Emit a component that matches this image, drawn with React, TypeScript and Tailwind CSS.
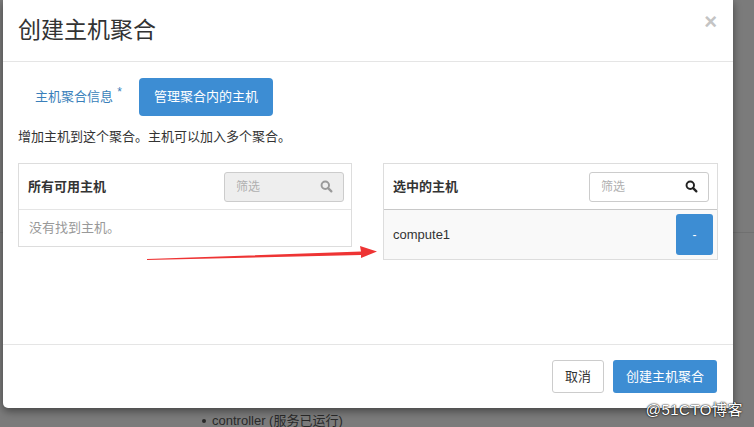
import React from "react";

const cjk = { fontFamily: '"Liberation Sans", "Noto Sans CJK SC", sans-serif' };

const SearchIcon = ({ color }: { color: string }) => (
  <svg width="13" height="13" viewBox="0 0 16 16" fill="none">
    <circle cx="6.5" cy="6.5" r="4.6" stroke={color} strokeWidth="2.4" />
    <path d="M10 10 L14 14" stroke={color} strokeWidth="2.8" strokeLinecap="round" />
  </svg>
);

const FilterInput = ({ disabled }: { disabled?: boolean }) => (
  <div
    className={
      "flex items-center justify-between w-[120px] h-[30px] rounded-[3px] border pl-[11px] pr-[10px] " +
      (disabled ? "bg-[#eeeeee] border-[#cccccc]" : "bg-white border-[#cccccc]")
    }
  >
    <span className="text-[12px] text-[#b0b0b0]">筛选</span>
    <SearchIcon color={disabled ? "#9a9a9a" : "#222222"} />
  </div>
);

export default function App() {
  return (
    <div className="relative w-[754px] h-[427px] overflow-hidden bg-[#7b7b7b]" style={cjk}>
      {/* page behind the modal */}
      <div className="absolute left-0 top-[232px] w-full h-px bg-[#707070]" />
      <div className="absolute left-[202px] top-[411px] flex items-center gap-[6px] text-[13px] text-[#2a2a2a]">
        <span className="w-[4px] h-[4px] rounded-full bg-[#2a2a2a]" />
        <span>controller (服务已运行)</span>
      </div>

      {/* modal */}
      <div className="relative ml-[3px] w-[730px] h-[408px] bg-white rounded-b-[5px] shadow-[0_3px_8px_rgba(0,0,0,0.45)] flex flex-col">
        <div className="h-[62px] border-b border-[#e5e5e5] flex items-center justify-between pl-[15px] pr-[16px]">
          <h4 className="text-[23px] text-[#333333] font-normal leading-none">创建主机聚合</h4>
          <span className="text-[#c4c4c4] text-[22px] font-bold leading-none -mt-[18px]">×</span>
        </div>

        <div className="flex-1 pl-[15px] pr-[15px] pt-[16px]">
          <div className="flex items-center h-[38px]">
            <span className="pl-[17px] pr-[26px] text-[13px] text-[#3a7fba] relative">
              主机聚合信息
              <span className="absolute right-[17px] -top-[4px] text-[12px] text-[#3a7fba]">*</span>
            </span>
            <span className="h-[38px] px-[15px] flex items-center rounded-[4px] bg-[#3d8dd3] text-white text-[13px]">
              管理聚合内的主机
            </span>
          </div>
          <p className="mt-[12px] text-[13px] text-[#333333] leading-[18px]">增加主机到这个聚合。主机可以加入多个聚合。</p>

          <div className="mt-[17px] flex justify-between items-start">
            <div className="w-[334px] border border-[#dddddd]">
              <div className="h-[46px] flex items-center justify-between pl-[9px] pr-[7px] border-b border-[#e5e5e5]">
                <span className="text-[13px] font-bold text-[#333333]">所有可用主机</span>
                <FilterInput disabled />
              </div>
              <div className="h-[36px] flex items-center pl-[10px] text-[13px] text-[#999999]">没有找到主机。</div>
            </div>

            <div className="w-[335px] border border-[#dddddd]">
              <div className="h-[46px] flex items-center justify-between pl-[9px] pr-[8px] border-b border-[#c8c8c8]">
                <span className="text-[13px] font-bold text-[#333333]">选中的主机</span>
                <FilterInput />
              </div>
              <div className="h-[49px] flex items-center justify-between pl-[9px] pr-[4px] bg-[#f9f9f9]">
                <span className="text-[13px] text-[#333333]">compute1</span>
                <span className="w-[37px] h-[41px] rounded-[3px] bg-[#3d8dd3] flex items-center justify-center text-white text-[12px]">
                  -
                </span>
              </div>
            </div>
          </div>
        </div>

        <div className="h-[64px] border-t border-[#e5e5e5] flex items-start justify-end gap-[9px] pr-[16px] pt-[15px]">
          <span className="h-[33px] px-[12px] flex items-center rounded-[3px] border border-[#cccccc] text-[13px] text-[#333333]">
            取消
          </span>
          <span className="h-[33px] px-[13px] flex items-center rounded-[3px] bg-[#3d8dd3] text-[13px] text-white">
            创建主机聚合
          </span>
        </div>

        {/* annotation arrow */}
        <svg className="absolute left-0 top-0 pointer-events-none" width="730" height="408">
          <polygon points="144,259 358,251.5 357,246 374,251.5 358,258 358,255 144,260" fill="#ee3434" />
        </svg>
      </div>

      <span className="absolute right-[11px] top-[399px] text-[15px] tracking-[0.5px] text-white [text-shadow:0_0_2px_#000,0_0_1px_#000]">
        @51CTO博客
      </span>
    </div>
  );
}
